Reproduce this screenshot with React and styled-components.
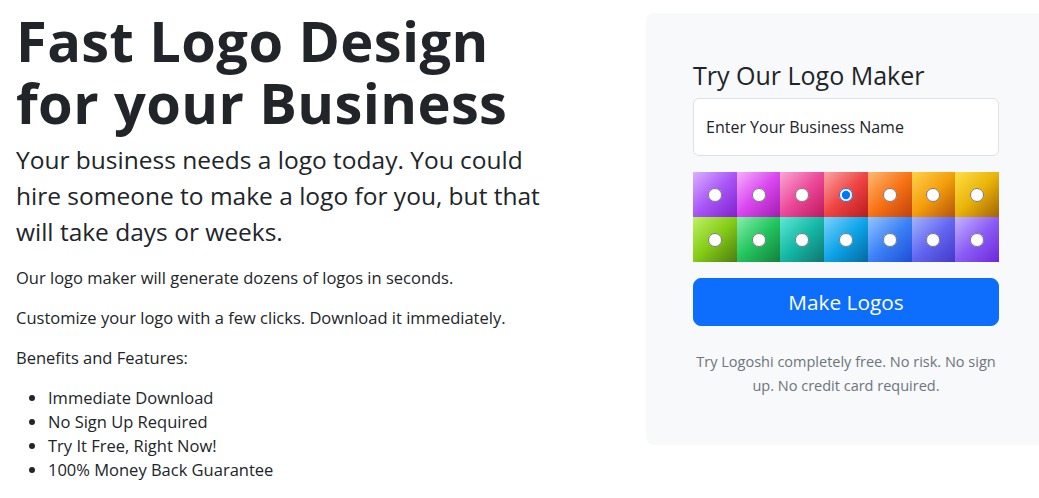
import React, { useState } from 'react';
import styled, { createGlobalStyle } from 'styled-components';

const GlobalStyle = createGlobalStyle`
  html, body {
    margin: 0;
    padding: 0;
    background: #fff;
    overflow: hidden;
  }
  body {
    font-family: "Open Sans", "Noto Sans", sans-serif;
    color: #212529;
    font-size: 16.5px;
    line-height: 24px;
  }
  * {
    box-sizing: border-box;
  }
`;

const Page = styled.div`
  display: flex;
  align-items: flex-start;
  padding-top: 13px;
  width: 1039px;
`;

const Intro = styled.section`
  width: 646px;
  flex-shrink: 0;
  padding: 0 74px 0 16px;
`;

const Title = styled.h1`
  margin: -4px 0 9px;
  font-size: 56px;
  font-weight: 700;
  line-height: 62px;
  letter-spacing: 0.4px;
  white-space: nowrap;
`;

const Lead = styled.p`
  margin: 0 0 16px;
  font-size: 24.5px;
  line-height: 36px;
`;

const Text = styled.p`
  margin: 0 0 16px;
`;

const List = styled.ul`
  margin: 0;
  padding-left: 32px;
`;

const Panel = styled.aside`
  flex: 1;
  background: #f8f9fa;
  border-radius: 8px 0 0 8px;
  padding: 48px 40px 48px 47px;
`;

const PanelTitle = styled.h4`
  margin: 0 0 8px;
  font-size: 25px;
  font-weight: 400;
  line-height: 29px;
`;

const NameInput = styled.input`
  display: block;
  width: 100%;
  height: 58px;
  padding: 16px 12px;
  font: inherit;
  font-size: 16px;
  color: #212529;
  background: #fff;
  border: 1px solid #dee2e6;
  border-radius: 6px;
  outline: none;
`;

const Swatches = styled.div`
  display: grid;
  grid-template-columns: repeat(7, 1fr);
  grid-auto-rows: 45px;
  margin-top: 16px;
`;

const Swatch = styled.label`
  display: flex;
  align-items: center;
  justify-content: center;
  background: linear-gradient(135deg, ${(p) => p.$from}, ${(p) => p.$via} 50%, ${(p) => p.$to});
  cursor: pointer;

  input {
    width: 14px;
    height: 14px;
    margin: 0;
  }
`;

const MakeButton = styled.button`
  display: block;
  width: 100%;
  margin-top: 16px;
  padding: 8px 16px;
  font: inherit;
  font-size: 20.8px;
  line-height: 30px;
  color: #fff;
  background: #0d6efd;
  border: 1px solid #0d6efd;
  border-radius: 8px;
  cursor: pointer;
`;

const Note = styled.p`
  margin: 24px 0 0;
  text-align: center;
  color: #6c757d;
  font-size: 14.5px;
  line-height: 23.5px;
`;

const colors = [
  ['#dcb0ff', '#a855f7', '#7e22ce'],
  ['#f5b0fc', '#d946ef', '#a21caf'],
  ['#f9a8d4', '#ec4899', '#be185d'],
  ['#fca5a5', '#ef4444', '#b91c1c'],
  ['#fdba74', '#f97316', '#c2410c'],
  ['#fcd34d', '#f59e0b', '#b45309'],
  ['#fde047', '#eab308', '#a16207'],
  ['#bef264', '#84cc16', '#4d7c0f'],
  ['#86efac', '#22c55e', '#15803d'],
  ['#5eead4', '#14b8a6', '#0f766e'],
  ['#7dd3fc', '#0ea5e9', '#0369a1'],
  ['#93c5fd', '#3b82f6', '#1d4ed8'],
  ['#a5b4fc', '#6366f1', '#4338ca'],
  ['#c4b5fd', '#8b5cf6', '#6d28d9'],
];

const benefits = [
  'Immediate Download',
  'No Sign Up Required',
  'Try It Free, Right Now!',
  '100% Money Back Guarantee',
];

export default function App() {
  const [picked, setPicked] = useState(3);
  const [name, setName] = useState('Enter Your Business Name');

  return (
    <>
      <GlobalStyle />
      <Page>
        <Intro>
          <Title>
            Fast Logo Design
            <br />
            for your Business
          </Title>
          <Lead>
            Your business needs a logo today. You could hire someone to make a logo for you, but that
            will take days or weeks.
          </Lead>
          <Text>Our logo maker will generate dozens of logos in seconds.</Text>
          <Text>Customize your logo with a few clicks. Download it immediately.</Text>
          <Text>Benefits and Features:</Text>
          <List>
            {benefits.map((b) => (
              <li key={b}>{b}</li>
            ))}
          </List>
        </Intro>
        <Panel>
          <PanelTitle>Try Our Logo Maker</PanelTitle>
          <NameInput value={name} onChange={(e) => setName(e.target.value)} />
          <Swatches>
            {colors.map(([from, via, to], i) => (
              <Swatch key={i} $from={from} $via={via} $to={to}>
                <input
                  type="radio"
                  name="color"
                  checked={picked === i}
                  onChange={() => setPicked(i)}
                />
              </Swatch>
            ))}
          </Swatches>
          <MakeButton>Make Logos</MakeButton>
          <Note>Try Logoshi completely free. No risk. No sign up. No credit card required.</Note>
        </Panel>
      </Page>
    </>
  );
}
